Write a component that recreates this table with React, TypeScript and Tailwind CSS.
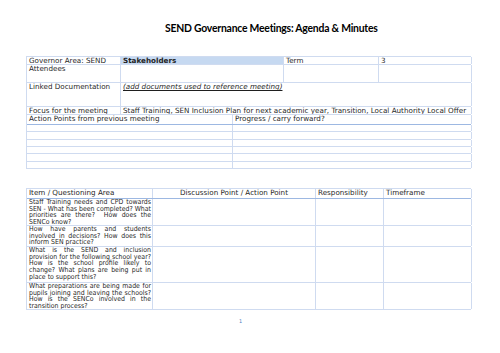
const LINE = "border-[#cfdbf0]";
const DARK = "border-b-[#9db8e2]";

type Cell = { w: string; text?: React.ReactNode; extra?: string };

function Row({ h, cells, bottom = LINE }: { h: string; cells: Cell[]; bottom?: string }) {
  return (
    <div className={`flex ${h} border-b ${LINE} ${bottom}`}>
      {cells.map((c, i) => (
        <div key={i} className={`${c.w} shrink-0 border-r ${LINE} px-[2px] overflow-hidden ${c.extra ?? ""}`}>
          {c.text}
        </div>
      ))}
    </div>
  );
}

// justified lines, last one left aligned
function Justified({ lines }: { lines: string[] }) {
  return (
    <div className="font-['DejaVu_Sans_Condensed','DejaVu_Sans',sans-serif] text-[6.9px] leading-[6.7px]">
      {lines.map((l, i) => (
        <div
          key={i}
          className={
            i < lines.length - 1
              ? "text-justify [text-align-last:justify] whitespace-pre"
              : "whitespace-pre"
          }
        >
          {l}
        </div>
      ))}
    </div>
  );
}

const ITEMS = [
  {
    h: "h-[27px]",
    lines: [
      "Staff Training needs and CPD towards",
      "SEN - What has been completed? What",
      "priorities are there?  How does the",
      "SENCo know?",
    ],
  },
  {
    h: "h-[21px]",
    lines: [
      "How have parents and students",
      "involved in decisions? How does this",
      "inform SEN practice?",
    ],
  },
  {
    h: "h-[36px]",
    lines: [
      "What is the SEND and inclusion",
      "provision for the following school year?",
      "How is the school profile likely to",
      "change? What plans are being put in",
      "place to support this?",
    ],
  },
  {
    h: "h-[27px]",
    lines: [
      "What preparations are being made for",
      "pupils joining and leaving the schools?",
      "How is the SENCo involved in the",
      "transition process?",
    ],
  },
];

export default function App() {
  return (
    <div className="w-[500px] h-[353px] bg-white text-[#1f1f1f] font-['DejaVu_Sans',sans-serif] text-[7.2px] leading-[7px] overflow-hidden">
      {/* title */}
      <div className="pt-[20px] pl-[165px] font-['Lato',sans-serif] font-bold text-[10.4px] tracking-[-0.22px] leading-[16px] text-black">
        SEND Governance Meetings: Agenda &amp; Minutes
      </div>

      {/* meeting details */}
      <div className={`ml-[26px] mt-[20px] w-[445px] border-l border-t ${LINE}`}>
        <Row
          h="h-[8px]"
          cells={[
            { w: "w-[94px]", text: "Governor Area: SEND" },
            { w: "w-[163px]", text: "Stakeholders", extra: "bg-[#c6d9f1] font-bold" },
            { w: "w-[95px]", text: "Term" },
            { w: "w-[93px]", text: "3" },
          ]}
        />
        <Row
          h="h-[18px]"
          cells={[
            { w: "w-[94px]", text: "Attendees" },
            { w: "w-[163px]" },
            { w: "w-[95px]" },
            { w: "w-[93px]" },
          ]}
        />
        <Row
          h="h-[24px]"
          cells={[
            { w: "w-[94px]", text: "Linked Documentation" },
            {
              w: "w-[351px]",
              text: <span className="italic underline">(add documents used to reference meeting)</span>,
            },
          ]}
        />
        <Row
          h="h-[8px]"
          cells={[
            { w: "w-[94px]", text: "Focus for the meeting" },
            {
              w: "w-[351px]",
              text: "Staff Training, SEN Inclusion Plan for next academic year, Transition, Local Authority Local Offer",
              extra: "whitespace-nowrap",
            },
          ]}
        />
        <Row
          h="h-[10px]"
          bottom={DARK}
          cells={[
            { w: "w-[206px]", text: "Action Points from previous meeting" },
            { w: "w-[239px]", text: "Progress / carry forward?" },
          ]}
        />
        {["h-[7px]", "h-[8px]", "h-[7px]", "h-[7px]", "h-[8px]", "h-[7px]"].map((h, i) => (
          <Row key={i} h={h} cells={[{ w: "w-[206px]" }, { w: "w-[239px]" }]} />
        ))}
      </div>

      {/* agenda items */}
      <div className={`ml-[26px] mt-[19px] w-[445px] border-l border-t ${LINE}`}>
        <Row
          h="h-[10px]"
          bottom={DARK}
          cells={[
            { w: "w-[126px]", text: "Item / Questioning Area" },
            { w: "w-[163px]", text: "Discussion Point / Action Point", extra: "text-center" },
            { w: "w-[68px]", text: "Responsibility" },
            { w: "w-[88px]", text: "Timeframe" },
          ]}
        />
        {ITEMS.map((it, i) => (
          <Row
            key={i}
            h={it.h}
            cells={[
              { w: "w-[126px]", text: <Justified lines={it.lines} />, extra: "pr-[1px]" },
              { w: "w-[163px]" },
              { w: "w-[68px]" },
              { w: "w-[88px]" },
            ]}
          />
        ))}
      </div>

      <div className="mt-[8px] pl-[239px] text-[5px] leading-[6px] text-[#4f81bd]">1</div>
    </div>
  );
}
